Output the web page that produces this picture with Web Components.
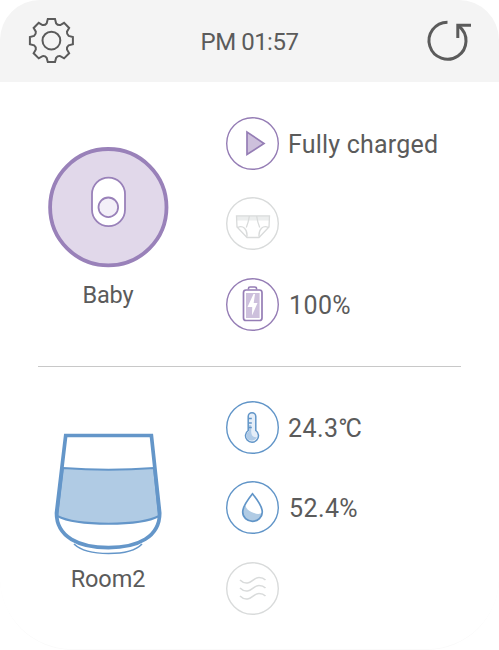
<!DOCTYPE html>
<html lang="en">
<head>
<meta charset="utf-8">
<title>Nursery monitor</title>
<style>
html,body{margin:0;width:499px;height:650px;overflow:hidden;background:#fff}
body{font-family:Roboto,"Noto Sans",sans-serif;color:#5b5b5b}
</style>
</head>
<body>
<monitor-card>
  <title-bar slot="header">PM 01:57</title-bar>
  <device-panel>
    <baby-sensor slot="device"></baby-sensor>
    <span slot="name" style="letter-spacing:-.1px">Baby</span>
    <status-row icon="play" style="--track:.2px">Fully charged</status-row>
    <status-row icon="diaper"></status-row>
    <status-row icon="battery" style="--track:.4px;--indent:10px">100%</status-row>
  </device-panel>
  <device-panel>
    <room-sensor slot="device"></room-sensor>
    <span slot="name" style="letter-spacing:-.1px">Room2</span>
    <status-row icon="temp" style="--track:.4px">24.3<span style="letter-spacing:-2.2px">°</span>C</status-row>
    <status-row icon="drop" style="--track:.4px;--indent:10px;--drop:2px">52.4%</status-row>
    <status-row icon="air"></status-row>
  </device-panel>
</monitor-card>
<script>
const define = (name, markup) => customElements.define(name, class extends HTMLElement {
  connectedCallback() {
    if (this.shadowRoot) return;
    const t = document.createElement('template');
    t.innerHTML = typeof markup === 'function' ? markup(this) : markup;
    this.attachShadow({mode: 'open'}).append(t.content.cloneNode(true));
  }
});

// Eight identical teeth, each rotated by 45 degrees and joined by curved valleys.
const gearPath = () => {
  const turn = (x, y, k) => {
    const a = k * Math.PI / 4, c = Math.cos(a), s = Math.sin(a);
    return (x * c - y * s).toFixed(2) + ' ' + (x * s + y * c).toFixed(2);
  };
  let d = 'M' + turn(-3.6, -21.5, 0);
  for (let k = 0; k < 8; k++) {
    d += 'L' + turn(3.6, -21.5, k) + 'L' + turn(4.7, -17.3, k) +
         'Q' + turn(6.3, -15.2, k) + ' ' + turn(-4.7, -17.3, k + 1) + 'L' + turn(-3.6, -21.5, k + 1);
  }
  return d + 'Z';
};

define('monitor-card', `<style>
:host{display:flex;flex-direction:column;width:499px;height:650px;box-sizing:border-box;overflow:hidden;
 background:#fff;border-radius:40px 40px 72px 72px;border-bottom:1px solid #fafafa}
main{display:grid;grid-template-rows:284px 284px;position:relative}
main::after{content:"";position:absolute;left:38px;top:284px;width:423px;height:1px;background:#c8c8c8}
</style><slot name="header"></slot><main><slot></slot></main>`);

define('title-bar', `<style>
:host{display:grid;grid-template-columns:100px 1fr 100px;align-items:center;height:82px;background:#f4f4f4;
 font-size:24px;text-align:center;letter-spacing:-.5px}
svg{display:block;fill:none;stroke:#5b5b5b}
span{padding-top:2px}
</style>
<svg width="100" height="82" viewBox="0 0 100 82" stroke-width="2"><g transform="translate(51.4 40.6)"><path d="${gearPath()}"/><circle r="8.9"/></g></svg>
<span><slot></slot></span>
<svg width="100" height="82" viewBox="399 0 100 82" stroke-width="3"><path d="M447.500 22.200A18.500 18.500 0 1 0 459 26.200"/><path d="M471 25.300H457.800V38"/></svg>`);

define('device-panel', `<style>
:host{display:grid;grid-template-columns:226px 1fr}
.device{display:flex;flex-direction:column;align-items:center;width:216px;padding-top:62px}
.name{font-size:23.500px;line-height:28px;margin-top:10px}
.rows{display:flex;flex-direction:column;gap:27px;padding-top:35px}
</style>
<div class="device"><slot name="device"></slot><div class="name"><slot name="name"></slot></div></div>
<div class="rows"><slot></slot></div>`);

define('baby-sensor', `<style>:host,svg{display:block}</style>
<svg width="124" height="127" viewBox="46 144 124 127" stroke="#9981b9"><circle cx="108.300" cy="207.200" r="58.200" fill="#e1d8ea" stroke-width="3.800"/><rect x="92" y="177.600" width="33" height="48.600" rx="16.500" fill="#fff" stroke-width="1.800"/><circle cx="108.300" cy="207.300" r="9.800" fill="#f3eff8" stroke-width="1.800"/></svg>`);

define('room-sensor', `<style>:host,svg{display:block}</style>
<svg width="124" height="127" viewBox="46 428 124 127" fill="none" stroke="#6496c9">
<path d="M74 544Q84 553.500 108.500 553.500T142 544" stroke-width="1.600"/>
<path d="M65.700 435.500H151.400L159.500 513C159.500 537 138 547.600 108.500 547.600S56.500 537 56.500 513Z" fill="#fff" stroke="none"/>
<path d="M63 468Q108.500 471.500 154 468L159 516Q145 523.700 108.500 523.700T57.200 516Z" fill="#b0cbe4" stroke-width="2"/>
<path d="M65.700 435.500H151.400L159.700 513C159.700 537 138 547.600 108.500 547.600S56.500 537 56.500 513Z" stroke-width="3.700"/></svg>`);

const glyphs = {
  play: ['#957db5', '<path d="M21 15V37.500L38 26.500Z" fill="#cdc0dc" stroke-width="1.700"/>'],
  diaper: ['#d9dbdb', '<path d="M11 20H43V23.500H11Z" fill="#eceeee" stroke="none"/><path d="M10.500 19H43.500L43 30L33 40.500H21L11 30ZM11.500 30.500C17 28 21.500 32 21 39.500M42.500 30.500C37 28 32.500 32 33 39.500M23.300 19.500Q22.500 25 20.300 30.500M30.700 19.500Q31.500 25 33.700 30.500" stroke-width="1.300"/>'],
  battery: ['#957db5', '<path d="M22.500 11.500V10.300Q22.500 9 24 9H28.500Q30.500 9 30.500 10.300V11.500" stroke-width="1.600"/><rect x="17.500" y="12" width="18.500" height="30.500" rx="2.500" stroke-width="1.700"/><path d="M20 15H33.600V40H20Z" fill="#cdc0dc" stroke="none"/><path d="M27.500 16L21.500 29H26.200L26 37.500L31.500 25H27.700L29 16Z" fill="#fff" stroke="none"/>'],
  temp: ['#6195c8', '<path d="M22.200 15.500A3.800 3.800 0 0 1 29.800 15.500V29.500A6.500 6.500 0 1 1 22.200 29.500Z" fill="#e5eef8" stroke-width="1.500"/><path d="M23 24V30Q20 32 20.300 36Q22 40 26.500 39.500Q30.500 38.500 30.800 36Q25.500 37 25.200 31V24Z" fill="#b0cbe7" stroke="none"/><path d="M22.500 17.400H25.800M22.500 21.900H25.800M22.500 26.400H25.800" stroke-width="1.500"/>'],
  drop: ['#6195c8', '<path d="M19.500 24.500Q16.700 29 16.700 31.500A10 9 0 0 0 36.700 31.500Q33 34 28 32Q20 29 19.500 24.500Z" fill="#b0cbe4" stroke="none"/><path d="M26.500 12.800Q16.700 25 16.700 31A9.800 9.300 0 0 0 36.300 31Q36.300 25 26.500 12.800Z" stroke-width="1.700"/>'],
  air: ['#d9dbdb', [0, 8, 16].map(y => `<path d="M14 ${18 + y}Q17.500 ${21.5 + y} 21.500 ${21 + y}C26 ${20.5 + y} 28 ${15.5 + y} 33 ${15.5 + y}Q37 ${15.5 + y} 39.500 ${18 + y}" stroke-width="1.600"/>`).join('')]
};

define('status-row', el => {
  const [color, art] = glyphs[el.getAttribute('icon')];
  return `<style>
:host{display:flex;align-items:center;height:53.300px;font-size:25px;letter-spacing:var(--track,0)}
svg{display:block;flex:none}
span{padding-left:var(--indent,9px);padding-top:var(--drop,2px);white-space:nowrap}
</style><svg width="53" height="53" viewBox="0 0 53 53" fill="none" stroke="${color}"><circle cx="26.500" cy="26.500" r="25.800" stroke-width="1.400"/>${art}</svg><span><slot></slot></span>`;
});
</script>
</body>
</html>
